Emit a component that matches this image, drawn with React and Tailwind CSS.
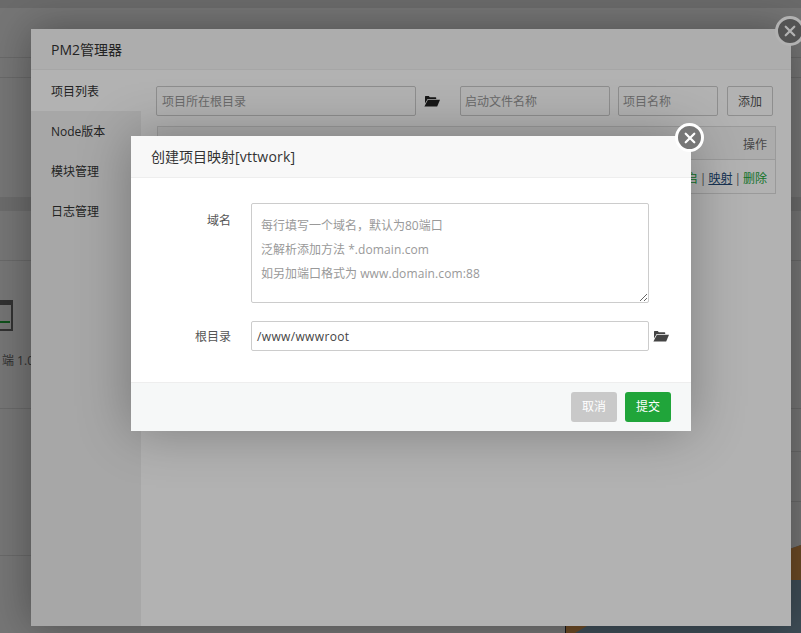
import React from 'react';

const fontStack = 'font-["Open_Sans","Noto_Sans_CJK_SC",sans-serif]';

function FolderIcon({ className }) {
  return (
    <svg viewBox="0 0 16 12" className={className} fill="currentColor">
      <path d="M1 8.5V1.6C1 1.2 1.3 1 1.6 1h3.2l1 1.2h5.8c.4 0 .6.3.6.6V4H3.6z" />
      <path d="M3.9 4.8H16l-2.7 6.4c-.1.2-.3.3-.5.3H0.4z" />
    </svg>
  );
}

function CloseIcon({ className }) {
  return (
    <svg viewBox="0 0 14 14" className={className} fill="none" stroke="currentColor" strokeWidth="2.6" strokeLinecap="round">
      <path d="M2 2l10 10M12 2L2 12" />
    </svg>
  );
}

function Backdrop() {
  return (
    <div className="relative flex h-[633px] w-[801px] flex-col bg-[#f2f2f2]">
      <div className="h-[8px] shrink-0 bg-[#dcdcdc]" />
      <div className="h-[50px] shrink-0 border-b border-[#d8d8d8]" />
      <div className="h-[20px] shrink-0 border-b border-[#d8d8d8]" />
      <div className="h-[119px] shrink-0" />
      <div className="h-[14px] shrink-0 bg-[#dedede]" />
      <div className="h-[50px] shrink-0 border-b border-[#d8d8d8]" />
      <div className="h-[148px] shrink-0 border-b border-[#d8d8d8]">
        <div className="mt-[39px] ml-[-18px] flex h-[31px] w-[31px] items-end justify-end border-2 border-t-[5px] border-[#666] bg-[#eee] pr-[1px] pb-[6px]">
          <div className="h-[2px] w-[12px] bg-[#20a53a]" />
        </div>
        <div className="mt-[21px] ml-[2px] text-[12px] whitespace-nowrap text-[#666]">端 1.0</div>
      </div>
      <div className="flex h-[147px] shrink-0 flex-col items-end border-b border-[#d8d8d8] pt-[42px]">
        <div className="h-[51px] w-[20px] border-y border-[#d8d8d8]" />
      </div>
      <svg viewBox="0 0 236 88" className="absolute right-0 bottom-0 h-[88px] w-[236px]">
        <path d="M0 88V81H1L236 0V88z" fill="#82a0b4" />
        <path d="M1 88V81L236 0V35H100L10 88z" fill="#e09a50" />
        <path d="M0.5 80V88" stroke="#333" />
      </svg>
    </div>
  );
}

function PmManager() {
  return (
    <div className="absolute top-[29px] left-[31px] flex h-[597px] w-[760px] flex-col bg-white text-[#333] shadow-[0_0_40px_rgba(0,0,0,0.35)]">
      <div className="flex h-[41px] shrink-0 items-center border-b border-[#eee] bg-[#f8f8f8] pl-5 text-[14px]">PM2管理器</div>
      <div className="flex grow">
        <div className="w-[110px] shrink-0 bg-[#f0f0f0] text-[12px]">
          <div className="flex h-[41px] items-center bg-white pt-[3px] pl-5">项目列表</div>
          <div className="flex h-[40px] items-center pt-[2px] pl-5">Node版本</div>
          <div className="flex h-[40px] items-center pt-[2px] pl-5">模块管理</div>
          <div className="flex h-[40px] items-center pt-[2px] pl-5">日志管理</div>
        </div>
        <div className="grow pt-[16px] pl-[15px]">
          <div className="flex items-center text-[12px]">
            <div className="flex h-[30px] w-[260px] items-center rounded-[2px] border border-[#ccc] pt-[2px] pl-[5px] text-[#999]">项目所在根目录</div>
            <FolderIcon className="mr-[20px] ml-2 h-[12px] w-[16px] text-[#222]" />
            <div className="flex h-[30px] w-[150px] items-center rounded-[2px] border border-[#ccc] pt-[2px] pl-[4px] text-[#999]">启动文件名称</div>
            <div className="ml-2 flex h-[30px] w-[100px] items-center rounded-[2px] border border-[#ccc] pt-[2px] pl-[4px] text-[#999]">项目名称</div>
            <div className="ml-[9px] flex h-[30px] w-[46px] items-center justify-center rounded-[2px] border border-[#ccc] pt-[2px] text-[#555]">添加</div>
          </div>
          <div className="mt-[10px] ml-px w-[619px] border border-[#ddd] text-[12px]">
            <div className="flex h-[33px] items-center justify-end border-b border-[#ddd] bg-[#f6f6f6] pt-[4px] pr-[8px] text-[#666]">操作</div>
            <div className="flex h-[33px] items-center justify-end gap-[2px] pt-[4px] pr-[8px] text-[#666]">
              <span className="text-[#20a53a]">重启</span>
              <span>|</span>
              <span className="text-[#234a78] underline">映射</span>
              <span>|</span>
              <span className="text-[#20a53a]">删除</span>
            </div>
          </div>
        </div>
      </div>
    </div>
  );
}

function MappingDialog() {
  return (
    <div className="absolute top-[136px] left-[131px] flex h-[295px] w-[560px] flex-col bg-white text-[#333] shadow-[0_0_50px_rgba(0,0,0,0.3)]">
      <div className="flex h-[42px] shrink-0 items-center border-b border-[#eee] bg-[#f8f8f8] pl-5 text-[14px]">
        <span>创建项目映射<span className="tracking-[0.2px]">[vttwork]</span></span>
      </div>
      <div className="grow pt-[25px] text-[12px]">
        <div className="flex items-start">
          <div className="mt-[9px] w-[100px] text-right text-[#555]">域名</div>
          <div className="ml-5 flex h-[100px] w-[398px] resize flex-col overflow-auto rounded-[2px] border border-[#ccc] pt-[10px] pl-[9px] leading-[24px] text-[#999]">
            <div>每行填写一个域名，默认为80端口</div>
            <div>泛解析添加方法 <span className="tracking-[0.1px]">*.domain.com</span></div>
            <div>如另加端口格式为 <span className="tracking-[0.12px]">www.domain.com:88</span></div>
          </div>
        </div>
        <div className="mt-[18px] flex items-center">
          <div className="w-[100px] pt-[2px] text-right text-[#555]">根目录</div>
          <div className="ml-5 flex h-[30px] w-[398px] items-center rounded-[2px] border border-[#ccc] pt-[2px] pl-[5px] tracking-[0.35px] text-[#444]">/www/wwwroot</div>
          <FolderIcon className="ml-[4px] h-[12px] w-[16px] text-[#444]" />
        </div>
      </div>
      <div className="flex h-[49px] shrink-0 items-center justify-end gap-2 border-t border-[#eee] bg-[#f6f8f8] pr-5 text-[12px] text-white">
        <div className="flex h-[30px] w-[46px] items-center justify-center rounded-[3px] bg-[#c9c9c9]">取消</div>
        <div className="flex h-[30px] w-[46px] items-center justify-center rounded-[3px] bg-[#20a53a]">提交</div>
      </div>
      <div className="absolute top-[-13px] right-[-13px] flex h-[29px] w-[29px] items-center justify-center rounded-full border-[3px] border-white bg-[#777] text-white">
        <CloseIcon className="h-[12px] w-[12px]" />
      </div>
    </div>
  );
}

export default function App() {
  return (
    <div className={`relative h-[633px] w-[801px] overflow-hidden ${fontStack}`}>
      <Backdrop />
      <div className="absolute inset-0 bg-black/30" />
      <PmManager />
      <div className="absolute top-[16px] left-[775px] flex h-[30px] w-[30px] items-center justify-center rounded-full border-[3px] border-white bg-[#777] text-white">
        <CloseIcon className="h-[12px] w-[12px]" />
      </div>
      <div className="absolute inset-0 bg-black/30" />
      <MappingDialog />
    </div>
  );
}
